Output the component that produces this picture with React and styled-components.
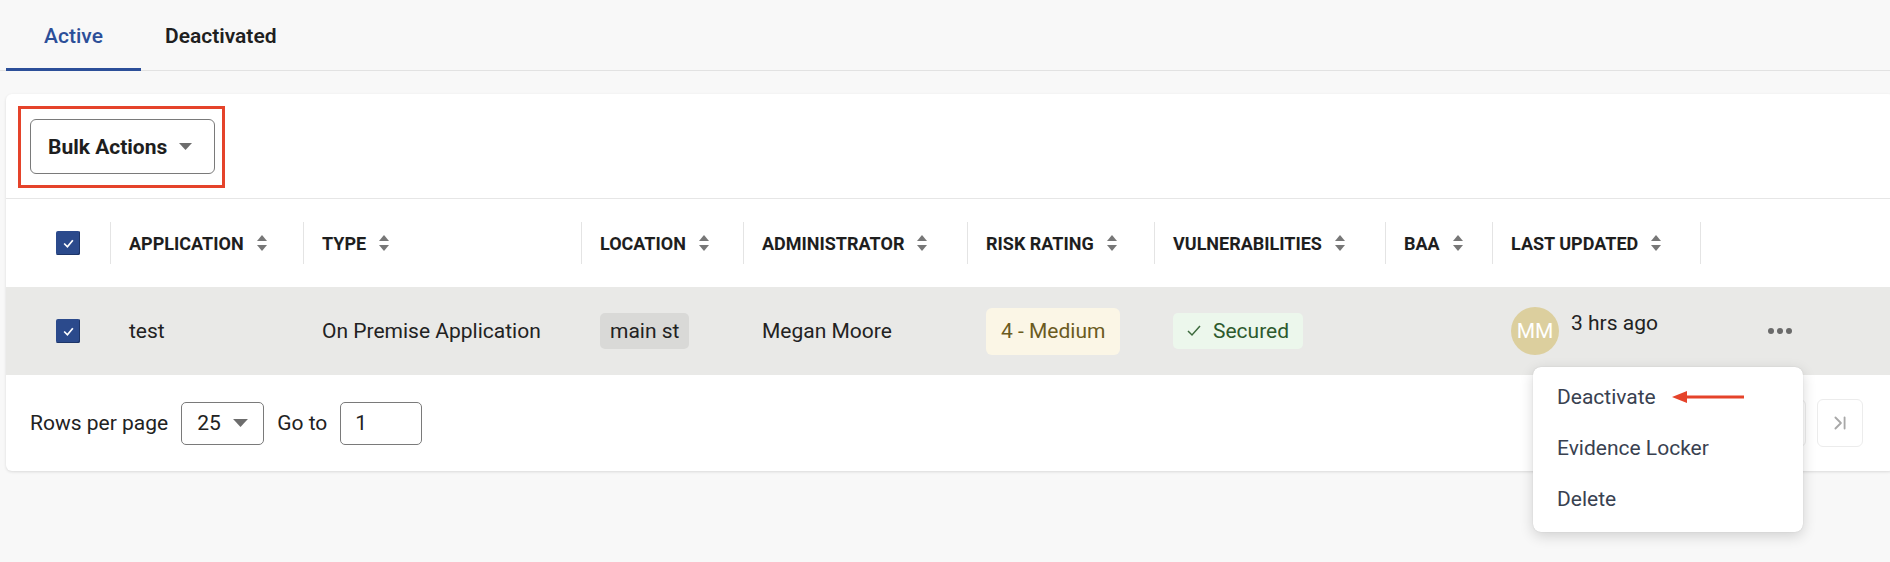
import styled, { createGlobalStyle } from "styled-components";
import { ChevronFirst, ChevronLeft, ChevronRight, ChevronLast } from "lucide-react";

const GlobalStyle = createGlobalStyle`
  body {
    margin: 0;
    background: #f8f8f8;
    font-family: Roboto, "Liberation Sans", Arial, sans-serif;
    overflow: hidden;
  }
  * { box-sizing: border-box; }
`;

const Page = styled.div`
  padding-left: 6px;
  width: 1890px;
  height: 562px;
`;

const TabBar = styled.div`
  display: flex;
  height: 71px;
  border-bottom: 1px solid #e2e2e2;
  margin-left: -6px;
  padding-left: 6px;
`;

const Tab = styled.div`
  height: 71px;
  min-width: 135px;
  padding: 3px 24px 0;
  margin-bottom: -1px;
  display: flex;
  align-items: center;
  justify-content: center;
  font-size: 21px;
  font-weight: ${(p) => (p.$active ? 500 : 600)};
  color: ${(p) => (p.$active ? "#2c4f99" : "#1f1f1f")};
  border-bottom: 3px solid ${(p) => (p.$active ? "#2c4f99" : "transparent")};
`;

const Card = styled.div`
  margin-top: 23px;
  width: calc(100% + 4px);
  background: #fff;
  border-radius: 6px;
  box-shadow: 0 1px 3px rgba(0, 0, 0, 0.12);
`;

const Toolbar = styled.div`
  padding: 12px 12px 10px;
  border-bottom: 1px solid #e6e6e6;
  height: 105px;
`;

const HighlightFrame = styled.div`
  display: inline-flex;
  border: 3px solid #e5432a;
  padding: 10px 7px 11px 9px;
`;

const BulkButton = styled.button`
  width: 185px;
  height: 55px;
  display: flex;
  align-items: center;
  gap: 12px;
  padding: 0 0 0 17px;
  background: #fff;
  border: 1px solid #7a7a7a;
  border-radius: 6px;
  font-family: inherit;
  font-size: 21px;
  font-weight: 700;
  color: #1e1e1e;
`;

const Caret = ({ w = 13, h = 7 }) => (
  <svg width={w} height={h} viewBox="0 0 13 7">
    <polygon points="0,0 13,0 6.5,7" fill="#6d6d6d" />
  </svg>
);

const COLS = "105px 193px 278px 162px 224px 187px 231px 107px 208px 1fr";

const Row = styled.div`
  display: grid;
  grid-template-columns: ${COLS};
  height: 88px;
  align-items: center;
  background: ${(p) => (p.$shaded ? "#e9e9e7" : "transparent")};
`;

const HeadCell = styled.div`
  display: flex;
  align-items: center;
  gap: 13px;
  height: 42px;
  padding-left: ${(p) => (p.$check ? "50px" : "18px")};
  border-right: 1px solid #e4e4e4;
  font-size: 18px;
  font-weight: 700;
  color: #1e1e1e;
  text-transform: uppercase;
`;

const Cell = styled.div`
  display: flex;
  align-items: center;
  padding-left: ${(p) => (p.$check ? "50px" : "18px")};
  font-size: 21px;
  color: #222;
  position: relative;
  height: 100%;
`;

const CheckBox = styled.div`
  width: 24px;
  height: 24px;
  border-radius: 2px;
  background: #2b4a8c;
  box-shadow: inset -1px -1px 0 #1d3568;
  display: flex;
  align-items: center;
  justify-content: center;
`;

const Check = () => (
  <CheckBox>
    <svg width="13" height="11" viewBox="0 0 12 10">
      <polyline points="2,5 5,8 10,2" fill="none" stroke="#fff" strokeWidth="1.6" />
    </svg>
  </CheckBox>
);

const SortIcon = () => (
  <svg width="10" height="18" viewBox="0 0 10 18">
    <polygon points="0,7 5,1 10,7" fill="#777" />
    <polygon points="0,11 5,17 10,11" fill="#777" />
  </svg>
);

const Chip = styled.span`
  display: inline-flex;
  align-items: center;
  gap: 12px;
  height: ${(p) => p.$h || 36}px;
  padding: 0 ${(p) => p.$px || 12}px;
  border-radius: ${(p) => p.$r || 5}px;
  background: ${(p) => p.$bg};
  color: ${(p) => p.$fg};
  font-size: 21px;
`;

const UpdatedWrap = styled.div`
  display: flex;
  align-items: flex-start;
  gap: 12px;
`;

const Avatar = styled.div`
  width: 48px;
  height: 48px;
  border-radius: 50%;
  background: #dccf9e;
  color: #fff;
  font-size: 21px;
  display: flex;
  align-items: center;
  justify-content: center;
`;

const UpdatedText = styled.span`
  margin-top: 4px;
  line-height: 24px;
`;

const Dots = styled.div`
  display: flex;
  gap: 3px;
  padding-left: 49px;
  span {
    width: 6px;
    height: 6px;
    border-radius: 50%;
    background: #6a6a6a;
  }
`;

const Menu = styled.div`
  position: absolute;
  top: 80px;
  left: -168px;
  width: 270px;
  padding: 4px 0 8px;
  background: #fff;
  border-radius: 8px;
  box-shadow: 0 4px 14px rgba(0, 0, 0, 0.16), 0 0 1px rgba(0, 0, 0, 0.2);
  z-index: 10;
`;

const MenuItem = styled.div`
  height: 51px;
  display: flex;
  align-items: center;
  padding-left: 24px;
  font-size: 21px;
  color: #394150;
`;

const Arrow = () => (
  <svg width="72" height="14" viewBox="0 0 72 14" style={{ marginLeft: 16 }}>
    <line x1="12" y1="7" x2="72" y2="7" stroke="#e5432a" strokeWidth="3" />
    <polygon points="0,7 15,1 15,13" fill="#e5432a" />
  </svg>
);

const Footer = styled.div`
  height: 96px;
  display: flex;
  align-items: center;
  gap: 13px;
  padding: 0 31px 0 24px;
  font-size: 21px;
  color: #222;
`;

const SelectBox = styled.div`
  width: 83px;
  height: 43px;
  border: 1px solid #7a7a7a;
  border-radius: 5px;
  display: flex;
  align-items: center;
  gap: 12px;
  padding-left: 15px;
`;

const InputBox = styled.div`
  width: 82px;
  height: 43px;
  border: 1px solid #7a7a7a;
  border-radius: 5px;
  display: flex;
  align-items: center;
  padding-left: 14px;
`;

const Pager = styled.div`
  margin-left: auto;
  display: flex;
  gap: 11px;
`;

const PageButton = styled.div`
  width: 46px;
  height: 48px;
  border: 1px solid #ececec;
  border-radius: 6px;
  display: flex;
  align-items: center;
  justify-content: center;
  color: #a8a8a8;
`;

const columns = [
  "Application",
  "Type",
  "Location",
  "Administrator",
  "Risk Rating",
  "Vulnerabilities",
  "BAA",
  "Last Updated",
];

export default function App() {
  return (
    <Page>
      <GlobalStyle />
      <TabBar>
        <Tab $active>Active</Tab>
        <Tab>Deactivated</Tab>
      </TabBar>
      <Card>
        <Toolbar>
          <HighlightFrame>
            <BulkButton>
              Bulk Actions
              <Caret />
            </BulkButton>
          </HighlightFrame>
        </Toolbar>

        <Row>
          <HeadCell $check>
            <Check />
          </HeadCell>
          {columns.map((c) => (
            <HeadCell key={c}>
              {c}
              <SortIcon />
            </HeadCell>
          ))}
          <div />
        </Row>

        <Row $shaded>
          <Cell $check>
            <Check />
          </Cell>
          <Cell>test</Cell>
          <Cell>On Premise Application</Cell>
          <Cell>
            <Chip $bg="#d9d9d7" $fg="#222" $px={10}>main st</Chip>
          </Cell>
          <Cell>Megan Moore</Cell>
          <Cell>
            <Chip $bg="#fbf6e6" $fg="#6b5b1f" $h={47} $px={15} $r={6}>
              4 - Medium
            </Chip>
          </Cell>
          <Cell>
            <Chip $bg="#ecf7ec" $fg="#2d5a2d" $px={14}>
              <svg width="14" height="12" viewBox="0 0 14 12">
                <polyline points="1,6 5,10 13,1" fill="none" stroke="#3d6a3d" strokeWidth="1.5" />
              </svg>
              Secured
            </Chip>
          </Cell>
          <Cell />
          <Cell>
            <UpdatedWrap>
              <Avatar>MM</Avatar>
              <UpdatedText>3 hrs ago</UpdatedText>
            </UpdatedWrap>
          </Cell>
          <Cell>
            <Dots>
              <span />
              <span />
              <span />
            </Dots>
            <Menu>
              <MenuItem>
                Deactivate
                <Arrow />
              </MenuItem>
              <MenuItem>Evidence Locker</MenuItem>
              <MenuItem>Delete</MenuItem>
            </Menu>
          </Cell>
        </Row>

        <Footer>
          Rows per page
          <SelectBox>
            25
            <Caret w={15} h={8} />
          </SelectBox>
          Go to
          <InputBox>1</InputBox>
          <Pager>
            <PageButton>
              <ChevronFirst size={22} />
            </PageButton>
            <PageButton>
              <ChevronLeft size={22} />
            </PageButton>
            <PageButton>
              <ChevronRight size={22} />
            </PageButton>
            <PageButton>
              <ChevronLast size={22} />
            </PageButton>
          </Pager>
        </Footer>
      </Card>
    </Page>
  );
}
